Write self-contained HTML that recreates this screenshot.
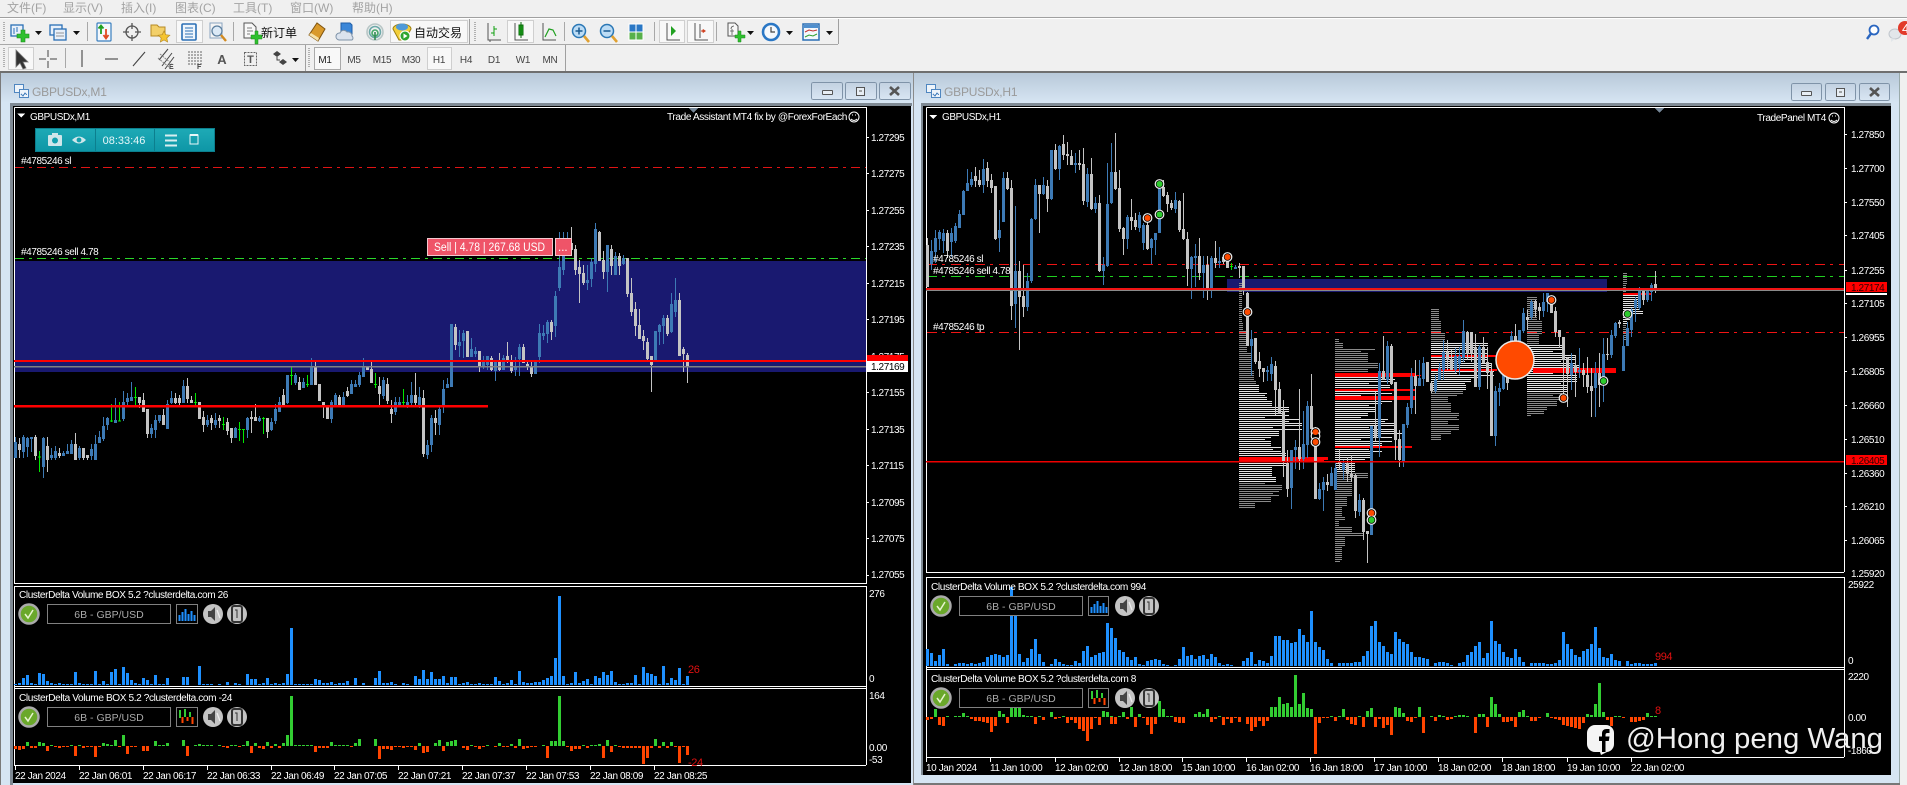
<!DOCTYPE html>
<html lang="zh"><head><meta charset="utf-8"><title>MT4</title>
<style>
html,body{margin:0;padding:0;background:#f0f0f0;width:1907px;height:785px;overflow:hidden}
svg{display:block;position:absolute;left:0;top:0}
text{font-family:"Liberation Sans","Noto Sans CJK SC",sans-serif}
.t{font-size:10px;fill:#fff;letter-spacing:-.4px}
.m{font-size:12px;fill:#a3a3a3}
.k{font-size:12px;fill:#111}
.tf{font-size:10px;fill:#444;text-anchor:middle;letter-spacing:-.3px}
.w{font-size:12px;fill:#9a9a9a;letter-spacing:-.2px}
.c{shape-rendering:geometricPrecision}
</style></head><body>
<svg width="1907" height="785" viewBox="0 0 1907 785" shape-rendering="crispEdges">
<defs>
<linearGradient id="tg" x1="0" y1="0" x2="0" y2="1"><stop offset="0" stop-color="#b8c9d9"/><stop offset="1" stop-color="#d6e5f3"/></linearGradient>
<linearGradient id="bg" x1="0" y1="0" x2="0" y2="1"><stop offset="0" stop-color="#c2d1e1"/><stop offset="1" stop-color="#d9e6f3"/></linearGradient>
<linearGradient id="teal" x1="0" y1="0" x2="0" y2="1"><stop offset="0" stop-color="#1eaab6"/><stop offset="1" stop-color="#0e96a6"/></linearGradient>
<pattern id="pw" width="96" height="22" patternUnits="userSpaceOnUse" patternTransform="translate(87,1)"><path d="M0 .5H96M0 2.500H50M0 4.500H96M0 6.500H72M0 8.500H34M0 10.500H96M0 12.500H60M0 14.500H96M0 16.500H44M0 18.500H84M0 20.500H26" stroke="#e4e4e4" fill="none"/></pattern>
<pattern id="pg" width="96" height="22" patternUnits="userSpaceOnUse" patternTransform="translate(87,1)"><path d="M0 .5H96M0 2.500H50M0 4.500H96M0 6.500H72M0 8.500H34M0 10.500H96M0 12.500H60M0 14.500H96M0 16.500H44M0 18.500H84M0 20.500H26" stroke="#8a8a8a" fill="none"/></pattern>
</defs>

<!-- chrome -->
<rect width="1907" height="785" fill="#f0f0f0"/>
<rect y="17" width="1907" height="1" fill="#a0a0a0"/><rect y="18" width="1907" height="1" fill="#fff"/>
<rect y="44" width="838" height="1" fill="#a8a8a8"/>
<rect y="71" width="1907" height="2" fill="#6f6f6f"/>
<path d="M469.5 19V44M838.5 19V44M305.5 45V71M565.5 45V71" stroke="#a0a0a0"/>
<path d="M87.5 22V41M233.5 22V41M564.5 22V41M654.5 22V41M716.5 22V41M65.5 48V68" stroke="#a8a8a8"/>
<path d="M4 22V41M475 22V41M4 48V68M309 48V68" stroke="#b0b0b0" stroke-dasharray="1 1" stroke-width="2"/>
<text class="m" x="7" y="12">文件(F)</text><text class="m" x="63" y="12">显示(V)</text><text class="m" x="121" y="12">插入(I)</text><text class="m" x="175" y="12">图表(C)</text><text class="m" x="233" y="12">工具(T)</text><text class="m" x="290" y="12">窗口(W)</text><text class="m" x="352" y="12">帮助(H)</text>

<!-- active buttons -->
<g fill="#f8f8f8" stroke="#cfcfcf"><rect x="176.5" y="20.5" width="26" height="22"/><rect x="390.5" y="20.5" width="77" height="22"/><rect x="507.5" y="20.5" width="26" height="22"/><rect x="659.5" y="20.5" width="25" height="22"/><rect x="687.5" y="20.5" width="26" height="22"/><rect x="8.5" y="47.5" width="25" height="22"/><rect x="314.5" y="47.5" width="26" height="22" stroke="#aaa"/><rect x="427.5" y="47.5" width="24" height="22"/></g>

<g class="c">
<!-- new chart -->
<g transform="translate(18,32)"><rect x="-7" y="-7" width="12" height="11" fill="#e8f0fa" stroke="#2a6fb5" stroke-width="1.3"/><path d="M-4-4V2M-1-5V0" stroke="#2a6fb5"/><path d="M3-2h4v4h4v4H7v4H3V6h-4V2h4z" fill="#2fc02f" stroke="#1a8a1a" stroke-width=".6"/></g>
<path d="M35 31h7l-3.500 4z M73 31h7l-3.500 4z M747 31h7l-3.500 4z M786 31h7l-3.500 4z M826 31h7l-3.500 4z M292 58h7l-3.500 4z" fill="#111"/>
<!-- profiles -->
<g transform="translate(58,32)" fill="#e8f0fa" stroke="#2a6fb5" stroke-width="1.3"><rect x="-8" y="-7" width="12" height="10"/><rect x="-4" y="-3" width="12" height="11"/><path d="M-2 1h8M-2 4h8" stroke="#777" stroke-width=".8"/></g>
<!-- market watch -->
<g transform="translate(104,32)"><rect x="-7" y="-9" width="14" height="18" rx="1" fill="#f4f8fc" stroke="#3a7fbf" stroke-width="1.2"/><path d="M-3 2V-6M-5.500-3.500-3-6.500-.5-3.500" stroke="#20a020" stroke-width="1.800" fill="none"/><path d="M2-3V6M-.5 3 2 6.500 4.500 3" stroke="#e04a20" stroke-width="1.800" fill="none"/></g>
<!-- crosshair -->
<g transform="translate(132,32)" fill="none" stroke="#555" stroke-width="1.300"><circle r="6"/><path d="M0-9V-3M0 3V9M-9 0H-3M3 0H9"/></g>
<!-- folder star -->
<g transform="translate(160,32)"><path d="M-9-7h6l2 2h6v9H-9z" fill="#f3d06a" stroke="#b68a24"/><path d="M4-1l1.800 3.700 4 .5-3 2.800.8 4-3.600-2-3.600 2 .8-4-3-2.800 4-.5z" fill="#f5c430" stroke="#b68a24" stroke-width=".7"/></g>
<!-- terminal -->
<g transform="translate(189,32)"><rect x="-7" y="-8" width="14" height="16" rx="1" fill="#eef5fc" stroke="#2a6fb5" stroke-width="1.600"/><path d="M-4-4h8M-4-1h8M-4 2h8M-4 5h8" stroke="#2a6fb5"/></g>
<!-- tester -->
<g transform="translate(217,32)"><rect x="-7" y="-9" width="12" height="15" fill="#f4f4f4" stroke="#8aa5c0"/><circle cx="0" cy="-1" r="5" fill="#dbe9f6" stroke="#5c7f9f" stroke-width="1.300"/><path d="M4 3l5 6" stroke="#d28a20" stroke-width="2.400"/></g>
<!-- new order -->
<g transform="translate(251,32)"><path d="M-7-9h8l4 4V6H-7z" fill="#f8f8f8" stroke="#555"/><path d="M-4-4h5M-4-1h6M-4 2h3" stroke="#555" stroke-width=".8"/><path d="M1 2h4v-4h3v4h4v4H8v5H5V6H1z" transform="translate(-1,1)" fill="#2fc02f" stroke="#1a8a1a" stroke-width=".5"/></g>
<text class="k" x="261" y="37">新订单</text>
<!-- expert gold -->
<g transform="translate(317,32)"><path d="M-8 3 0-9 8-3 1 9z" fill="#d99a2b" stroke="#7f5410"/><path d="M-8 3 1 9 2 6-6 1z" fill="#f5e2a8"/></g>
<!-- cloud -->
<g transform="translate(346,32)"><path d="M-5-9h9l2 2V2H-5z" fill="#3a86d8" stroke="#1f5ea8"/><path d="M-7 8a3.500 3.500 0 0 1 1-7 4 4 0 0 1 7-1 4 4 0 0 1 5 4 2.500 2.500 0 0 1 0 4z" fill="#dbe3ee" stroke="#7f93a8"/></g>
<!-- signal -->
<g transform="translate(375,32)" fill="none" stroke-width="1.600"><circle r="8" stroke="#b8c6c6"/><circle r="5.500" stroke="#6ca8a8"/><circle cy="1" r="3" stroke="#44a868"/><path d="M0 0V8" stroke="#338a55"/></g>
<!-- auto -->
<g transform="translate(402,32)"><path d="M-9-3a9 5 0 0 1 18 0L3 8h-6z" fill="#f3cf3a" stroke="#9c7f10"/><ellipse cy="-5" rx="6" ry="3.500" fill="#4f9ad8"/><circle cx="3" cy="4" r="5" fill="#2fa52f" stroke="#fff"/><path d="M1.500 1.500v5l4-2.500z" fill="#fff"/></g>
<text class="k" x="414" y="37">自动交易</text>
<!-- bar/candle/line -->
<g fill="none" stroke="#555"><path d="M488 23V40H501M490 40V42"/><path d="M515 23V40H528"/><path d="M543 23V40H556"/><path d="M667 23V40H680"/><path d="M695 23V40H708"/></g>
<path d="M494 26V36M491 33h3M494 29h3" stroke="#10a010" fill="none"/>
<rect x="519" y="25" width="4" height="10" fill="#20b020" stroke="#0a6a0a"/><path d="M521 22V38" stroke="#0a6a0a"/>
<path d="M545 37 549 29 553 30 556 36" fill="none" stroke="#20a020" stroke-width="1.200"/>
<path d="M671 26v10l5-5z" fill="#20a020"/>
<path d="M700 24V38" stroke="#555"/><path d="M703 29l3 2-3 2-1-2z" fill="#d04020"/><path d="M704 31h-3" stroke="#d04020"/>
<!-- zoom -->
<g transform="translate(579,31)"><circle r="6.500" fill="#bcdcf5" stroke="#2a77b5" stroke-width="1.500"/><path d="M-3.500 0H3.500M0-3.500V3.500" stroke="#1a5a90" stroke-width="1.500"/><path d="M5 5 10 11" stroke="#e0a030" stroke-width="2.600"/></g>
<g transform="translate(607,31)"><circle r="6.500" fill="#bcdcf5" stroke="#2a77b5" stroke-width="1.500"/><path d="M-3.500 0H3.500" stroke="#1a5a90" stroke-width="1.500"/><path d="M5 5 10 11" stroke="#e0a030" stroke-width="2.600"/></g>
<g transform="translate(636,32)"><rect x="-7" y="-8" width="14" height="8" fill="#2a77c5"/><rect x="-7" y="0" width="14" height="8" fill="#58b04a"/><path d="M-7-8H7V8H-7ZM-7 0H7M0-8V8" fill="none" stroke="#fff" stroke-width="1"/></g>
<!-- indicator -->
<g transform="translate(734,32)"><path d="M-6-9h7l3 3V4H-6z" fill="#f8f8f8" stroke="#555"/><path d="M-3-3c0-3 3-3 3-3M-4-1h4M-2-3V3" stroke="#555" stroke-width=".8" fill="none"/><path d="M1 3h3v-4h3v4h4v3H7v4H4V6H1z" fill="#2fc02f" stroke="#1a8a1a" stroke-width=".5"/></g>
<!-- clock -->
<g transform="translate(771,32)"><circle r="8" fill="#f4f8fc" stroke="#2a77c5" stroke-width="2.600"/><path d="M0-5V0H4" stroke="#444" fill="none" stroke-width="1.200"/></g>
<!-- template -->
<g transform="translate(811,32)"><rect x="-8" y="-8" width="16" height="16" fill="#f4f8fc" stroke="#2a6fb5" stroke-width="1.500"/><rect x="-7" y="-7" width="14" height="3" fill="#4f8fce"/><path d="M-6 0-2-2 2-1 6-2" stroke="#c03030" fill="none"/><path d="M-6 5-2 3 2 4 6 2" stroke="#30a030" fill="none"/></g>

<!-- row 2 -->
<path d="M16 50V67L20 63 23 69 26 68 23 62H28Z" fill="#333" stroke="#777" stroke-width=".8"/>
<path d="M48 50V57M48 61V68M39 59H46M50 59H57" stroke="#444" fill="none"/>
<path d="M82 50V67M105 59H118" stroke="#333" fill="none"/>
<path d="M133 66 145 52" stroke="#444" fill="none" stroke-width="1.100"/>
<path d="M159 60 168 49M162 66 172 53M165 69 174 57" stroke="#444" fill="none"/><path d="M160 54 172 64M158 58 170 68" stroke="#888" fill="none" stroke-dasharray="2 1"/>
<text x="169" y="69" style="font-size:7px;font-weight:bold" fill="#444">E</text>
<path d="M188 52H202M188 55H202M188 58H202M188 61H202M188 64H202" stroke="#666" stroke-dasharray="2 1" fill="none"/>
<text x="197" y="69" style="font-size:7px;font-weight:bold" fill="#444">F</text>
<text x="222" y="64" text-anchor="middle" style="font-size:13px;font-weight:bold" fill="#555">A</text>
<rect x="244.500" y="52.500" width="12" height="13" fill="none" stroke="#666" stroke-dasharray="2 1"/><text x="250.500" y="63" text-anchor="middle" style="font-size:11px;font-weight:bold" fill="#555">T</text>
<path d="M273 54l4-3 4 3-4 3zM279 62l4-3 4 3-4 3z" fill="#444"/><path d="M277 57v3h3" stroke="#444" fill="none"/>
<!-- search & chat -->
<g transform="translate(1872,32)"><circle cx="2" cy="-2" r="4.500" fill="#fff" stroke="#2a66c0" stroke-width="1.800"/><path d="M-1 1.500-5 7" stroke="#2a66c0" stroke-width="2.400"/></g>
<ellipse cx="1895" cy="34" rx="6" ry="5" fill="#e2e6ea" stroke="#c0c6cc"/><path d="M1891 38l0 4 4-3z" fill="#e2e6ea"/>
<circle cx="1905" cy="28" r="7" fill="#e23a2a"/><text x="1902" y="33" style="font-size:13px" fill="#fff">4</text>
</g>
<text class="tf" x="325" y="63" style="fill:#222">M1</text><text class="tf" x="354" y="63">M5</text><text class="tf" x="382" y="63">M15</text><text class="tf" x="411" y="63">M30</text><text class="tf" x="439" y="63">H1</text><text class="tf" x="466" y="63">H4</text><text class="tf" x="494" y="63">D1</text><text class="tf" x="523" y="63">W1</text><text class="tf" x="550" y="63">MN</text>

<!-- LEFT WINDOW -->
<rect x="1" y="73" width="913" height="712" fill="#d6e5f3"/>
<rect x="1" y="73" width="913" height="30" fill="url(#tg)"/>
<rect x="0" y="73" width="1" height="712" fill="#7a7a7a"/>
<rect x="10" y="103" width="902" height="3" fill="#7f8a94"/>
<rect x="10" y="103" width="3" height="682" fill="#7f8a94"/>
<rect x="13" y="106" width="898" height="677" fill="#000"/>
<g fill="#eef4fa" stroke="#4f86c0"><rect x="14.500" y="84.500" width="9" height="8"/><rect x="19.500" y="89.500" width="9" height="8"/></g>
<path d="M21 94l2 2 2-3 2 2" stroke="#4f86c0" fill="none"/>
<text class="w" x="32" y="96">GBPUSDx,M1</text>

<!-- RIGHT WINDOW -->
<rect x="914" y="73" width="986" height="711" fill="#d6e5f3"/>
<rect x="914" y="73" width="986" height="30" fill="url(#tg)"/>
<rect x="913" y="73" width="1" height="712" fill="#8a8a8a"/>
<rect x="1899" y="73" width="1" height="712" fill="#9aa"/>
<rect x="914" y="783" width="986" height="2" fill="#777"/>
<rect x="921" y="103" width="970" height="3" fill="#7f8a94"/>
<rect x="921" y="103" width="2" height="672" fill="#7f8a94"/>
<rect x="923" y="106" width="968" height="669" fill="#000"/>
<g fill="#eef4fa" stroke="#4f86c0"><rect x="926.500" y="84.500" width="9" height="8"/><rect x="931.500" y="89.500" width="9" height="8"/></g>
<path d="M933 94l2 2 2-3 2 2" stroke="#4f86c0" fill="none"/>
<text class="w" x="944" y="96">GBPUSDx,H1</text>

<!-- window buttons -->
<g fill="url(#bg)" stroke="#7f93a8">
<rect x="811.500" y="82.500" width="31" height="17" rx="2"/><rect x="845.500" y="82.500" width="31" height="17" rx="2"/><rect x="879.500" y="82.500" width="31" height="17" rx="2"/>
<rect x="1791.500" y="83.500" width="30" height="17" rx="2"/><rect x="1825.500" y="83.500" width="30" height="17" rx="2"/><rect x="1859.500" y="83.500" width="30" height="17" rx="2"/>
</g>
<g fill="#e8eef4" stroke="#555"><rect x="822.500" y="90.500" width="10" height="4" rx="1"/><rect x="1801.500" y="91.500" width="10" height="4" rx="1"/><rect x="856.500" y="87.500" width="8" height="8"/><rect x="1836.500" y="88.500" width="8" height="8"/></g>
<path d="M859 91h3M1839 92h3" stroke="#555"/>
<path class="c" d="M890 87l9 8M899 87l-9 8M1870 88l9 8M1879 88l-9 8" stroke="#555" stroke-width="2.600"/>

<!-- LEFT CHART -->
<rect x="15" y="261" width="851" height="111" fill="#191970"/>
<path d="M14.500 107.500H866.500V584M14.500 107.500V584M14 583.500H866M14 586.500H866M866.500 586V765M14.500 586V765M14 686.500H866M14 688.500H866M14 765.500H866" stroke="#fff" fill="none"/>
<path d="M15 167.500H866" stroke="#e01414" stroke-dasharray="9 5 3 5" fill="none"/>
<path d="M15 258.500H866" stroke="#2ad82a" stroke-dasharray="9 5 3 5" fill="none" stroke-width="1"/>
<g fill="none" stroke="#3d7ab5"><path d="M15.500 437V458M23.500 435V458M27.500 437V457M31.500 437V452M43.500 437V478M51.500 448V460M55.500 446V460M63.500 451V456M67.500 444V454M71.500 440V454M79.500 446V460M91.500 444V460M95.500 435V460M99.500 431V443M103.500 417V441M107.500 417V430M115.500 398V423M123.500 391V421M127.500 393V406M131.500 382V401M151.500 424V438M155.500 415V438M159.500 415V423M167.500 400V429M171.500 391V404M183.500 380V403M207.500 415V427M215.500 413V428M235.500 427V438M247.500 417V438M259.500 416V422M271.500 418V431M275.500 404V424M279.500 397V412M287.500 375V404M295.500 373V385M303.500 378V388M311.500 358V385M331.500 400V423M335.500 393V407M343.500 392V406M351.500 380V394M355.500 380V387M359.500 372V387M363.500 358V377M383.500 377V399M395.500 397V415M399.500 397V407M407.500 395V408M411.500 382V407M419.500 387V408M427.500 440V459M431.500 415V452M439.500 407V435M443.500 380V413M447.500 378V388M451.500 324V387M459.500 330V357M463.500 330V358M471.500 338V357M475.500 347V357M483.500 356V369M487.500 356V370M495.500 362V381M503.500 355V370M515.500 357V376M519.500 344V376M535.500 360V374M539.500 324V363M543.500 325V340M547.500 320V343M555.500 291V337M559.500 232V291M563.500 232V275M567.500 232V255M587.500 265V290M591.500 258V287M595.500 223V272M607.500 245V292M615.500 252V275M623.500 255V265M655.500 331V362M659.500 324V345M663.500 315V344M671.500 293V333M675.500 278V317"/>
<path stroke-width="3" d="M15.500 442V458M23.500 437V452M27.500 438V447M31.500 437V439M43.500 438V467M51.500 455V458M55.500 451V458M63.500 453V456M67.500 451V454M71.500 444V454M79.500 448V458M91.500 449V456M95.500 444V460M99.500 437V443M103.500 426V439M107.500 418V425M115.500 420V423M123.500 402V419M127.500 398V402M131.500 397V401M151.500 428V434M155.500 420V430M159.500 415V421M167.500 404V429M171.500 398V403M183.500 386V403M207.500 420V425M215.500 420V425M235.500 428V438M247.500 418V430M259.500 418V421M271.500 422V430M275.500 409V421M279.500 402V412M287.500 375V403M295.500 375V383M303.500 382V388M311.500 367V385M331.500 402V419M335.500 395V406M343.500 397V406M351.500 384V394M355.500 384V387M359.500 375V385M363.500 367V377M383.500 380V396M395.500 402V412M399.500 402V405M407.500 402V405M411.500 395V403M419.500 397V407M427.500 445V455M431.500 418V445M439.500 409V425M443.500 389V407M447.500 384V388M451.500 324V387M459.500 342V346M463.500 333V341M471.500 349V357M475.500 351V354M483.500 362V367M487.500 356V365M495.500 362V371M503.500 358V370M515.500 366V370M519.500 347V359M535.500 360V374M539.500 333V357M543.500 333V336M547.500 322V334M555.500 296V326M559.500 267V288M563.500 255V270M567.500 240V250M587.500 280V283M591.500 262V279M595.500 229V264M607.500 245V272M615.500 256V275M623.500 258V264M655.500 331V362M659.500 325V332M663.500 318V326M671.500 304V332M675.500 300V312"/></g>
<g fill="none" stroke="#c4c4c4"><path d="M19.500 438V458M35.500 435V460M47.500 437V472M59.500 448V458M75.500 433V460M83.500 448V460M87.500 455V460M139.500 397V408M143.500 393V412M147.500 409V438M163.500 409V425M175.500 393V404M179.500 395V405M187.500 378V403M191.500 396V403M199.500 402V419M203.500 411V432M211.500 415V430M219.500 415V428M227.500 418V435M231.500 428V443M251.500 411V433M255.500 404V421M267.500 418V438M283.500 389V407M299.500 377V390M315.500 360V385M319.500 384V401M323.500 402V418M327.500 405V419M339.500 395V407M347.500 387V397M367.500 366V370M371.500 360V383M379.500 377V405M387.500 378V404M391.500 400V423M415.500 373V407M423.500 390V457M435.500 410V435M455.500 324V350M467.500 331V357M479.500 351V372M491.500 356V371M499.500 353V371M507.500 342V363M511.500 355V373M523.500 344V363M527.500 360V370M531.500 362V377M551.500 320V340M571.500 227V256M575.500 245V275M579.500 260V303M583.500 265V285M599.500 231V260M603.500 251V279M611.500 245V275M619.500 253V275M627.500 258V297M631.500 278V316M635.500 302V336M639.500 309V339M643.500 330V350M647.500 338V360M651.500 356V392M667.500 315V336M679.500 293V356M683.500 347V372M687.500 353V383"/>
<path stroke-width="3" d="M19.500 444V450M35.500 437V456M47.500 446V460M59.500 453V456M75.500 444V460M83.500 448V458M87.500 455V458M139.500 397V403M143.500 400V412M147.500 409V434M163.500 415V425M175.500 398V403M179.500 398V403M187.500 386V399M191.500 400V403M199.500 402V419M203.500 417V425M211.500 418V423M219.500 418V421M227.500 422V431M231.500 428V438M251.500 417V419M255.500 417V421M267.500 418V432M283.500 395V405M299.500 382V390M315.500 367V385M319.500 384V401M323.500 402V405M327.500 406V419M339.500 397V406M347.500 391V396M367.500 366V370M371.500 369V383M379.500 386V394M387.500 384V401M391.500 409V414M415.500 395V403M423.500 398V454M435.500 418V423M455.500 327V345M467.500 331V357M479.500 351V367M491.500 358V370M499.500 360V370M507.500 356V361M511.500 360V371M523.500 347V363M527.500 364V367M531.500 366V374M551.500 322V332M571.500 243V250M575.500 249V270M579.500 267V274M583.500 273V283M599.500 232V261M603.500 260V272M611.500 249V266M619.500 256V266M627.500 258V294M631.500 293V312M635.500 309V326M639.500 325V339M643.500 336V341M647.500 342V359M651.500 356V365M667.500 318V334M679.500 300V356M683.500 349V354M687.500 355V367"/></g>
<g fill="none" stroke="#00e800"><path d="M39.500 451V472M38 457h3M111.500 404V422M110 421h3M119.500 402V421M118 421h3M135.500 387V405M134 397.500h3M195.500 393V405M194 402.500h3M223.500 417V430M222 424.500h3M239.500 422V441M238 429.500h3M243.500 429V443M242 429.500h3M263.500 417V434M262 418.500h3M291.500 367V385M290 375.500h3M307.500 375V387M306 384.500h3M375.500 373V388M374 384.500h3M403.500 389V405M402 402.500h3"/></g>
<rect x="14" y="360" width="852" height="2" fill="#f00"/><rect x="14" y="366" width="852" height="1.500" fill="#808080"/>
<rect x="14" y="405" width="474" height="2.500" fill="#f00"/>
<text class="t" x="21" y="164">#4785246 sl</text><text class="t" x="21" y="255">#4785246 sell 4.78</text>
<text class="t" x="30" y="120">GBPUSDx,M1</text>
<path d="M17 113.500h8l-4 4z" fill="#fff"/>
<path d="M689 108h9l-4.500 5z" fill="#778899"/>
<text class="t" x="667" y="120" textLength="180" lengthAdjust="spacingAndGlyphs">Trade Assistant MT4 fix by @ForexForEach</text>
<g class="c" fill="none" stroke="#fff"><circle cx="854" cy="117" r="5"/><path d="M851 119q3 3 6 0"/></g><path d="M852 115h1M855 115h1" stroke="#fff"/>
<!-- teal panel -->
<rect x="35.500" y="128.500" width="179" height="23" fill="url(#teal)" stroke="#0c7f8e"/>
<path d="M95.500 129V151M154.500 129V151" stroke="#0c7f8e"/>
<g class="c"><rect x="48" y="135" width="14" height="11" rx="1" fill="#cfe6ea"/><rect x="52" y="133" width="6" height="3" fill="#cfe6ea"/><circle cx="55" cy="140.500" r="3" fill="#11a0ae"/><path d="M72 140q7-7 14 0q-7 7-14 0z" fill="#cfe6ea"/><circle cx="79" cy="140" r="2.400" fill="#11a0ae"/></g>
<text x="124" y="144" text-anchor="middle" style="font-size:11px" fill="#e6f6f8">08:33:46</text>
<path d="M165 135.500h12M165 140.500h12M165 145.500h12" stroke="#d8eef0" stroke-width="1.600"/>
<rect x="190" y="135" width="8" height="9" fill="none" stroke="#e8f6f8" stroke-width="1.400"/><rect x="190" y="134" width="8" height="2" fill="#e8f6f8"/>
<!-- sell btn -->
<rect x="427.500" y="238.500" width="125" height="17" fill="#ef5468" stroke="#f4c8cf"/><rect x="555.500" y="238.500" width="16" height="17" fill="#ef5468" stroke="#f4c8cf"/>
<text x="434" y="251" style="font-size:11.500px" fill="#fff" textLength="111" lengthAdjust="spacingAndGlyphs">Sell | 4.78 | 267.68 USD</text><text x="558" y="251" style="font-size:11.500px" fill="#fff">...</text>
<!-- left axis -->
<path d="M866 137.500h3M866 173.500h3M866 210.500h3M866 246.500h3M866 283.500h3M866 319.500h3M866 356.500h3M866 392.500h3M866 429.500h3M866 465.500h3M866 502.500h3M866 538.500h3M866 575.500h3" stroke="#fff"/>
<g class="t"><text x="871" y="141">1.27295</text><text x="871" y="177">1.27275</text><text x="871" y="214">1.27255</text><text x="871" y="250">1.27235</text><text x="871" y="287">1.27215</text><text x="871" y="323">1.27195</text><text x="871" y="360">1.27175</text><text x="871" y="396">1.27155</text><text x="871" y="433">1.27135</text><text x="871" y="469">1.27115</text><text x="871" y="506">1.27095</text><text x="871" y="542">1.27075</text><text x="871" y="578">1.27055</text></g>
<rect x="867" y="355" width="41" height="7" fill="#f00"/><rect x="867" y="361" width="41" height="11" fill="#fff"/>
<text class="t" x="871" y="370" style="fill:#000">1.27169</text>
<text class="t" x="869" y="597">276</text><text class="t" x="869" y="682">0</text><text class="t" x="869" y="699">164</text><text class="t" x="869" y="751">0.00</text><text class="t" x="869" y="763">-53</text>
<path d="M15 765V770M79 765V770M143 765V770M207 765V770M271 765V770M334 765V770M398 765V770M462 765V770M526 765V770M590 765V770M654 765V770" stroke="#fff" transform="translate(.5,0)"/>
<g class="t"><text x="15" y="779">22 Jan 2024</text><text x="79" y="779">22 Jan 06:01</text><text x="143" y="779">22 Jan 06:17</text><text x="207" y="779">22 Jan 06:33</text><text x="271" y="779">22 Jan 06:49</text><text x="334" y="779">22 Jan 07:05</text><text x="398" y="779">22 Jan 07:21</text><text x="462" y="779">22 Jan 07:37</text><text x="526" y="779">22 Jan 07:53</text><text x="590" y="779">22 Jan 08:09</text><text x="654" y="779">22 Jan 08:25</text></g>

<!-- left sub1 -->
<path fill="none" stroke="#1e90ff" stroke-width="3" d="M15.500 685v-1M19.500 685v-2M23.500 685v-7M27.500 685v-10M31.500 685v-2M35.500 685v-1M39.500 685v-12M43.500 685v-11M47.500 685v-4M51.500 685v-2M55.500 685v-1M59.500 685v-2M63.500 685v-1M67.500 685v-1M71.500 685v-1M75.500 685v-13M79.500 685v-2M83.500 685v-1M87.500 685v-1M91.500 685v-1M95.500 685v-14M99.500 685v-1M103.500 685v-4M107.500 685v-1M111.500 685v-13M115.500 685v-16M119.500 685v-1M123.500 685v-18M127.500 685v-12M131.500 685v-5M135.500 685v-2M139.500 685v-1M143.500 685v-7M147.500 685v-5M151.500 685v-1M155.500 685v-10M159.500 685v-1M163.500 685v-1M167.500 685v-7M183.500 685v-8M187.500 685v-8M199.500 685v-19M203.500 685v-1M207.500 685v-1M211.500 685v-1M219.500 685v-1M227.500 685v-3M235.500 685v-2M239.500 685v-1M247.500 685v-11M251.500 685v-6M255.500 685v-6M259.500 685v-1M263.500 685v-2M267.500 685v-7M271.500 685v-1M275.500 685v-2M279.500 685v-1M283.500 685v-2M287.500 685v-11M291.500 685v-57M295.500 685v-1M299.500 685v-1M303.500 685v-1M307.500 685v-1M311.500 685v-1M315.500 685v-6M319.500 685v-5M323.500 685v-2M327.500 685v-2M331.500 685v-3M335.500 685v-1M339.500 685v-2M343.500 685v-2M347.500 685v-4M355.500 685v-7M363.500 685v-2M375.500 685v-7M379.500 685v-14M383.500 685v-2M387.500 685v-2M391.500 685v-3M395.500 685v-1M403.500 685v-2M407.500 685v-1M415.500 685v-9M419.500 685v-6M423.500 685v-15M427.500 685v-6M431.500 685v-13M435.500 685v-6M439.500 685v-6M443.500 685v-9M447.500 685v-2M451.500 685v-8M455.500 685v-8M459.500 685v-1M463.500 685v-2M467.500 685v-3M471.500 685v-1M475.500 685v-1M479.500 685v-2M483.500 685v-1M487.500 685v-1M491.500 685v-1M495.500 685v-8M499.500 685v-4M503.500 685v-1M507.500 685v-2M511.500 685v-5M515.500 685v-1M519.500 685v-14M523.500 685v-3M527.500 685v-2M531.500 685v-2M535.500 685v-3M539.500 685v-3M543.500 685v-5M547.500 685v-7M551.500 685v-9M555.500 685v-27M559.500 685v-89M563.500 685v-9M567.500 685v-1M571.500 685v-2M575.500 685v-13M579.500 685v-2M583.500 685v-4M587.500 685v-6M591.500 685v-1M595.500 685v-9M599.500 685v-7M603.500 685v-13M607.500 685v-10M611.500 685v-14M615.500 685v-3M619.500 685v-1M623.500 685v-1M627.500 685v-2M631.500 685v-2M635.500 685v-10M639.500 685v-1M643.500 685v-18M647.500 685v-12M651.500 685v-11M655.500 685v-9M659.500 685v-1M663.500 685v-19M667.500 685v-2M671.500 685v-7M675.500 685v-5M679.500 685v-17M683.500 685v-1M687.500 685v-9"/>
<!-- left sub2 -->
<path fill="none" stroke="#32cd32" stroke-width="3" d="M27.500 746v-4M39.500 746v-4M43.500 746v-3M51.500 746v-1M71.500 746v-1M79.500 746v-1M103.500 746v-3M107.500 746v-2M111.500 746v-1M115.500 746v-6M123.500 746v-11M155.500 746v-5M159.500 746v-1M163.500 746v-1M167.500 746v-3M183.500 746v-6M195.500 746v-1M199.500 746v-2M203.500 746v-1M207.500 746v-1M211.500 746v-1M219.500 746v-1M231.500 746v-1M235.500 746v-1M243.500 746v-1M247.500 746v-5M255.500 746v-3M267.500 746v-4M275.500 746v-2M283.500 746v-3M287.500 746v-11M291.500 746v-50M295.500 746v-1M299.500 746v-1M303.500 746v-1M307.500 746v-1M311.500 746v-1M331.500 746v-4M335.500 746v-1M339.500 746v-1M343.500 746v-1M347.500 746v-1M355.500 746v-3M359.500 746v-7M375.500 746v-7M419.500 746v-3M435.500 746v-3M439.500 746v-6M447.500 746v-4M451.500 746v-5M455.500 746v-6M471.500 746v-1M487.500 746v-1M499.500 746v-3M511.500 746v-2M519.500 746v-7M543.500 746v-1M551.500 746v-5M555.500 746v-5M559.500 746v-50M563.500 746v-5M583.500 746v-1M591.500 746v-1M595.500 746v-1M599.500 746v-2M607.500 746v-6M615.500 746v-1M655.500 746v-7M663.500 746v-4M671.500 746v-4"/>
<path fill="none" stroke="#ff4500" stroke-width="3" d="M15.500 746v3M19.500 746v4M23.500 746v3M31.500 746v2M35.500 746v2M47.500 746v5M55.500 746v1M59.500 746v2M63.500 746v1M67.500 746v1M75.500 746v10M83.500 746v2M87.500 746v1M91.500 746v1M95.500 746v11M99.500 746v1M119.500 746v1M127.500 746v8M131.500 746v1M135.500 746v1M143.500 746v5M147.500 746v5M187.500 746v10M223.500 746v1M227.500 746v2M239.500 746v1M251.500 746v7M259.500 746v2M263.500 746v3M271.500 746v2M279.500 746v2M315.500 746v6M319.500 746v2M323.500 746v2M327.500 746v2M351.500 746v1M379.500 746v13M383.500 746v3M387.500 746v3M391.500 746v4M395.500 746v1M399.500 746v1M403.500 746v2M407.500 746v1M411.500 746v1M415.500 746v4M423.500 746v7M427.500 746v6M443.500 746v5M463.500 746v2M467.500 746v4M475.500 746v1M479.500 746v3M483.500 746v1M495.500 746v1M503.500 746v1M507.500 746v1M515.500 746v2M523.500 746v3M527.500 746v2M531.500 746v1M535.500 746v1M547.500 746v12M567.500 746v1M571.500 746v5M575.500 746v3M579.500 746v3M587.500 746v2M603.500 746v12M611.500 746v6M619.500 746v1M623.500 746v2M627.500 746v2M631.500 746v2M635.500 746v2M639.500 746v2M643.500 746v18M647.500 746v12M651.500 746v2M659.500 746v2M667.500 746v2M675.500 746v1M679.500 746v17M683.500 746v1M687.500 746v9"/>
<!-- left sub UI -->
<text class="t" x="19" y="598" textLength="209" lengthAdjust="spacingAndGlyphs">ClusterDelta Volume BOX 5.2 ?clusterdelta.com 26</text>
<text class="t" x="19" y="701" textLength="213" lengthAdjust="spacingAndGlyphs">ClusterDelta Volume BOX 5.2 ?clusterdelta.com -24</text>
<text class="t" x="688" y="673" style="font-size:11px;fill:#e01010">26</text><text class="t" x="688" y="766" style="font-size:11px;fill:#e01010">-24</text>
<g fill="none" stroke="#808080" stroke-width="1"><rect x="47.500" y="604.500" width="123" height="19"/><rect x="47.500" y="707.500" width="123" height="19"/><rect x="176.500" y="604.500" width="21" height="19"/><rect x="176.500" y="707.500" width="21" height="19"/></g>
<text x="109" y="618" text-anchor="middle" style="font-size:10.500px" fill="#aaa">6B - GBP/USD</text><text x="109" y="721" text-anchor="middle" style="font-size:10.500px" fill="#aaa">6B - GBP/USD</text>
<path d="M179.500 621v-6M182.500 621v-9M185.500 621v-12M188.500 621v-7M191.500 621v-10M194.500 621v-6" stroke="#1e90ff" stroke-width="2"/>
<path d="M180 710v8M185 709v8M190 712v5" stroke="#32cd32" stroke-width="2"/><path d="M182.500 717v6M187.500 717v4M192.500 717v7" stroke="#ff4500" stroke-width="2"/>
<g class="c">
<g id="a1"><circle cx="29" cy="614" r="9.500" fill="#6aa82a" stroke="#aaa" stroke-width="2.500"/><path d="M25 614l3 4 5-8" fill="none" stroke="#e8f5d0" stroke-width="1.500"/></g>
<circle cx="29" cy="717" r="9.500" fill="#6aa82a" stroke="#aaa" stroke-width="2.500"/><path d="M25 717l3 4 5-8" fill="none" stroke="#e8f5d0" stroke-width="1.500"/>
<g fill="#c4c4c4"><circle cx="213" cy="614" r="10"/><circle cx="237" cy="614" r="10"/><circle cx="213" cy="717" r="10"/><circle cx="237" cy="717" r="10"/></g>
<path d="M208 611h3l4-4v14l-4-4h-3zM208 714h3l4-4v14l-4-4h-3z" fill="#444"/><path d="M217 610l3 8M217 713l3 8" stroke="#eee" stroke-width="1.300"/>
<rect x="232" y="606" width="10" height="16" rx="2" fill="none" stroke="#333" stroke-width="2"/><rect x="232" y="709" width="10" height="16" rx="2" fill="none" stroke="#333" stroke-width="2"/>
<path d="M235 610h2v8M235 713h2v8" stroke="#333" fill="none"/>
</g>

<!-- RIGHT CHART -->
<path d="M926.500 107.500H1844.500V572M926.500 107.500V572M926 572.500H1844M926 577.500H1844M1844.500 577V757M926.500 577V757M926 667.500H1844M926 669.500H1844M926 757.500H1844" stroke="#fff" fill="none"/>
<path d="M927 264.500H1844" stroke="#f01414" stroke-dasharray="10 5 3 6" fill="none"/>
<path d="M927 276.500H1844" stroke="#20d020" stroke-dasharray="10 5 3 6" fill="none"/>
<path d="M927 332.500H1844" stroke="#f01414" stroke-dasharray="10 5 3 6" fill="none"/>
<rect x="1227" y="279" width="380" height="13" fill="#191970"/>
<!-- profiles -->
<path fill="url(#pg)" d="M1239 283H1242V322H1243V330H1246V340H1247V353H1251V370H1254V380H1256V385H1239Z"/>
<path fill="url(#pw)" d="M1239 385H1259V392H1267V400H1272V407H1289V417H1299V423H1302V430H1279V437H1271V447H1281V453H1286V467H1272V477H1276V483H1239Z"/>
<path fill="url(#pg)" d="M1239 483H1282V490H1279V497H1271V503H1255V508H1244V509H1239Z"/>
<path fill="url(#pg)" d="M1335 338H1339V343H1343V348H1375V353H1368V363H1378V368H1368V373H1335Z"/>
<path fill="url(#pw)" d="M1335 373H1395V380H1390V390H1392V402H1382V407H1375V412H1368V417H1388V423H1395V430H1402V437H1392V443H1382V452H1372V458H1365V463H1355V473H1335Z"/>
<path fill="url(#pg)" d="M1335 473H1368V478H1352V497H1347V507H1342V517H1345V520H1339V527H1352V532H1363V537H1345V547H1342V553H1342V560H1340V562H1335Z"/>
<path fill="url(#pg)" d="M1431 308H1439V320H1441V332H1445V343H1431Z"/>
<path fill="url(#pw)" d="M1431 343H1488V353H1488V363H1491V370H1494V378H1471V383H1466V390H1431Z"/>
<path fill="url(#pg)" d="M1431 390H1463V397H1448V403H1451V412H1459V420H1448V425H1459V430H1451V435H1441V440H1431Z"/>
<path fill="url(#pg)" d="M1527 297H1537V320H1542V335H1539V345H1527Z"/>
<path fill="url(#pw)" d="M1527 345H1565V355H1575V365H1580V375H1577V385H1567V393H1527Z"/>
<path fill="url(#pg)" d="M1527 393H1562V400H1557V407H1547V411H1544V415H1531V416H1527Z"/>
<path fill="url(#pg)" d="M1623 273H1627V285H1626V294H1623Z"/><path fill="url(#pw)" d="M1623 294H1641V305H1640V310H1643V315H1633V320H1627V324H1623Z"/><path fill="url(#pg)" d="M1623 324H1626V340H1623Z"/>
<g fill="#f00"><rect x="1239" y="457" width="89" height="3"/><rect x="1239" y="460" width="85" height="1"/><rect x="1335" y="373" width="80" height="4"/><rect x="1415" y="375" width="6" height="1"/><rect x="1335" y="389" width="80" height="2"/><rect x="1335" y="396" width="80" height="4"/><rect x="1335" y="446" width="77" height="2"/><rect x="1431" y="355" width="66" height="2"/><rect x="1431" y="369" width="66" height="2"/><rect x="1533" y="368" width="83" height="5"/><rect x="1623" y="293" width="28" height="2"/></g>
<!-- right candles -->
<g fill="none" stroke="#c4c4c4"><path d="M927.500 238V287M947.500 230V258M975.500 167V187M979.500 170V187M987.500 162V187M991.500 174V193M995.500 186V240M1007.500 172V190M1011.500 180V320M1019.500 261V350M1023.500 265V317M1039.500 185V233M1047.500 180V212M1055.500 144V170M1063.500 135V160M1067.500 142V165M1071.500 150V165M1079.500 150V170M1083.500 148V205M1091.500 158V210M1099.500 195V272M1115.500 133V190M1119.500 170V232M1123.500 227V255M1131.500 199V230M1135.500 213V230M1147.500 215V250M1163.500 180V197M1167.500 192V212M1171.500 200V210M1179.500 200V232M1183.500 193V240M1187.500 232V286M1199.500 238V280M1207.500 256V300M1215.500 241V268M1223.500 255V264M1227.500 255V268M1239.500 263V278M1243.500 266V295M1247.500 292V346M1255.500 338V364M1259.500 352V377M1263.500 368V382M1275.500 361V415M1279.500 382V414M1283.500 400V477M1287.500 450V497M1299.500 389V470M1311.500 374V429M1315.500 427V499M1327.500 474V491M1339.500 450V470M1347.500 457V482M1351.500 455V482M1355.500 474V518M1363.500 498V540M1367.500 532V563M1375.500 392V441M1383.500 336V380M1391.500 344V385M1395.500 382V460M1399.500 430V467M1415.500 360V414M1427.500 362V382M1431.500 382V393M1447.500 340V370M1451.500 350V370M1467.500 331V360M1471.500 332V362M1475.500 334V387M1483.500 337V363M1487.500 347V389M1491.500 363V436M1507.500 368V390M1515.500 324V345M1527.500 310V330M1535.500 300V317M1539.500 303V320M1551.500 297V313M1555.500 307V337M1559.500 330V348M1563.500 337V398M1567.500 357V407M1575.500 355V397M1583.500 363V387M1587.500 357V393M1591.500 368V417M1599.500 353V407M1607.500 338V360M1619.500 320V328M1643.500 288V305M1655.500 271V293"/>
<path stroke-width="3" d="M927.500 245V287M947.500 233V251M975.500 176V181M979.500 180V185M987.500 168V181M991.500 180V188M995.500 186V239M1007.500 178V189M1011.500 188V306M1019.500 271V297M1023.500 296V307M1039.500 185V194M1047.500 186V199M1055.500 150V169M1063.500 144V155M1067.500 154V156M1071.500 156V165M1079.500 163V165M1083.500 164V201M1091.500 174V209M1099.500 203V271M1115.500 172V189M1119.500 188V229M1123.500 228V239M1131.500 217V221M1135.500 220V227M1147.500 225V249M1163.500 187V196M1167.500 195V204M1171.500 203V208M1179.500 201V230M1183.500 229V239M1187.500 239V269M1199.500 256V273M1207.500 265V288M1215.500 258V263M1223.500 257V262M1227.500 261V268M1239.500 266V268M1243.500 266V290M1247.500 293V346M1255.500 338V362M1259.500 361V369M1263.500 368V372M1275.500 366V390M1279.500 389V414M1283.500 411V462M1287.500 463V489M1299.500 447V459M1311.500 406V429M1315.500 445V499M1327.500 482V485M1339.500 462V463M1347.500 463V474M1351.500 474V477M1355.500 475V511M1363.500 500V532M1367.500 531V534M1375.500 426V438M1383.500 371V380M1391.500 346V384M1395.500 382V440M1399.500 439V460M1415.500 376V386M1427.500 362V382M1431.500 383V391M1447.500 352V360M1451.500 359V370M1467.500 332V354M1471.500 332V354M1475.500 347V387M1483.500 347V363M1487.500 362V373M1491.500 371V436M1507.500 376V383M1515.500 336V342M1527.500 317V320M1535.500 301V309M1539.500 307V311M1551.500 304V313M1555.500 311V332M1559.500 330V337M1563.500 337V360M1567.500 358V374M1575.500 365V372M1583.500 370V375M1587.500 375V387M1591.500 386V391M1599.500 373V385M1607.500 354V355M1619.500 322V324M1643.500 290V300M1655.500 284V288"/></g>
<g fill="none" stroke="#3d7ab5"><path d="M931.500 240V270M935.500 230V263M939.500 230V250M943.500 229V253M951.500 228V257M955.500 223V243M959.500 210V228M963.500 190V215M967.500 169V191M971.500 172V187M983.500 159V193M999.500 210V252M1003.500 172V222M1015.500 206V328M1027.500 273V311M1031.500 218V283M1035.500 179V220M1043.500 177V195M1051.500 150V200M1059.500 145V180M1075.500 153V173M1087.500 168V207M1095.500 197V213M1103.500 257V285M1107.500 163V267M1111.500 143V204M1127.500 215V249M1139.500 212V232M1143.500 223V250M1151.500 238V264M1155.500 233V255M1159.500 180V233M1175.500 192V213M1191.500 256V299M1195.500 244V287M1203.500 256V298M1211.500 256V298M1219.500 247V268M1235.500 265V269M1251.500 330V376M1267.500 366V381M1271.500 357V381M1291.500 450V509M1295.500 440V469M1303.500 411V469M1307.500 401V458M1319.500 483V500M1323.500 477V511M1331.500 467V486M1335.500 463V490M1343.500 460V480M1359.500 494V516M1371.500 426V535M1379.500 363V457M1387.500 341V384M1403.500 424V467M1407.500 403V428M1411.500 368V414M1419.500 360V386M1423.500 357V386M1435.500 375V393M1439.500 363V380M1443.500 340V380M1455.500 348V373M1459.500 347V375M1463.500 320V362M1479.500 345V390M1495.500 386V446M1499.500 383V406M1503.500 373V390M1511.500 331V353M1519.500 330V345M1523.500 308V333M1531.500 300V320M1543.500 293V317M1547.500 293V312M1571.500 353V390M1579.500 348V378M1595.500 362V417M1603.500 338V402M1611.500 330V358M1615.500 322V338M1623.500 335V371M1627.500 322V346M1631.500 308V337M1635.500 297V322M1639.500 287V310M1647.500 288V302M1651.500 283V301"/>
<path stroke-width="3" d="M931.500 251V264M935.500 238V252M939.500 232V239M943.500 233V241M951.500 233V242M955.500 226V241M959.500 214V228M963.500 191V215M967.500 183V191M971.500 179V185M983.500 169V185M999.500 230V238M1003.500 178V222M1015.500 271V304M1027.500 281V307M1031.500 219V281M1035.500 185V219M1043.500 185V194M1051.500 150V199M1059.500 146V169M1075.500 163V165M1087.500 174V202M1095.500 203V209M1103.500 265V271M1107.500 204V266M1111.500 172V203M1127.500 217V239M1139.500 215V228M1143.500 225V243M1151.500 239V248M1155.500 233V240M1159.500 185V233M1175.500 200V209M1191.500 257V269M1195.500 256V258M1203.500 265V273M1211.500 258V288M1219.500 261V263M1235.500 267V269M1251.500 339V346M1267.500 370V372M1271.500 364V374M1291.500 450V488M1295.500 447V450M1303.500 444V459M1307.500 406V445M1319.500 489V499M1323.500 482V490M1331.500 473V486M1335.500 468V490M1343.500 463V470M1359.500 500V512M1371.500 426V535M1379.500 371V438M1387.500 346V380M1403.500 424V461M1407.500 407V425M1411.500 376V408M1419.500 378V386M1423.500 363V379M1435.500 380V391M1439.500 368V380M1443.500 352V370M1455.500 356V370M1459.500 356V364M1463.500 331V358M1479.500 347V387M1495.500 391V436M1499.500 388V392M1503.500 375V389M1511.500 336V343M1519.500 330V342M1523.500 313V331M1531.500 302V317M1543.500 302V311M1547.500 293V302M1571.500 363V375M1579.500 370V372M1595.500 373V388M1603.500 354V377M1611.500 335V355M1615.500 323V336M1623.500 346V371M1627.500 328V346M1631.500 310V330M1635.500 300V308M1639.500 290V308M1647.500 290V300M1651.500 285V292"/></g>
<path d="M1231.500 263V270M1230 266.500h3" stroke="#00e800" fill="none"/>
<rect x="926" y="288" width="918" height="2" fill="#f01414"/><rect x="926" y="290" width="918" height="1" fill="#8a8a8a"/>
<rect x="926" y="461" width="918" height="1.500" fill="#e00"/>
<!-- markers -->
<g class="c" stroke="#eee" stroke-width="1.200"><g fill="#000"><circle cx="1159.500" cy="184" r="4.300"/><circle cx="1159.500" cy="214.500" r="4.300"/><circle cx="1147.500" cy="218" r="4.300"/><circle cx="1227.500" cy="257" r="4.300"/><circle cx="1247.500" cy="312" r="4.300"/><circle cx="1315.500" cy="432" r="4.300"/><circle cx="1315.500" cy="436" r="4.300"/><circle cx="1315.500" cy="442" r="4.300"/><circle cx="1371.500" cy="513" r="4.300"/><circle cx="1371.500" cy="520" r="4.300"/><circle cx="1563.500" cy="398" r="4.300"/><circle cx="1603.500" cy="381" r="4.300"/><circle cx="1551.500" cy="300" r="4.300"/><circle cx="1627.500" cy="314" r="4.300"/></g>
<g stroke="none" fill="#ff4a00"><circle cx="1147.500" cy="218" r="3"/><circle cx="1227.500" cy="257" r="3"/><circle cx="1247.500" cy="312" r="3"/><circle cx="1315.500" cy="432" r="3"/><circle cx="1315.500" cy="442" r="3"/><circle cx="1371.500" cy="513" r="3"/><circle cx="1563.500" cy="398" r="3"/><circle cx="1551.500" cy="300" r="3"/></g>
<g stroke="none" fill="#2ecc2e"><circle cx="1159.500" cy="184" r="3"/><circle cx="1159.500" cy="214.500" r="3"/><circle cx="1371.500" cy="520" r="3"/><circle cx="1603.500" cy="381" r="3"/><circle cx="1627.500" cy="314" r="3"/></g>
<circle cx="1515" cy="360" r="19" fill="#ff4a00" stroke="#e8e8e8" stroke-width="1.500"/></g>
<text class="t" x="933" y="262">#4785246 sl</text><text class="t" x="933" y="274">#4785246 sell 4.78</text><text class="t" x="933" y="330">#4785246 tp</text>
<text class="t" x="942" y="120">GBPUSDx,H1</text><path d="M929 115h8l-4 4z" fill="#fff"/>
<path d="M1655 108h9l-4.500 5z" fill="#778899"/>
<text class="t" x="1757" y="121" textLength="69" lengthAdjust="spacingAndGlyphs">TradePanel MT4</text>
<g class="c" fill="none" stroke="#fff"><circle cx="1834" cy="118" r="5"/><path d="M1831 120q3 3 6 0"/></g><path d="M1832 116h1M1835 116h1" stroke="#fff"/>
<!-- right axis -->
<path d="M1844 134.500h3M1844 168.500h3M1844 202.500h3M1844 235.500h3M1844 270.500h3M1844 303.500h3M1844 337.500h3M1844 371.500h3M1844 405.500h3M1844 439.500h3M1844 473.500h3M1844 506.500h3M1844 540.500h3" stroke="#fff"/>
<g class="t"><text x="1851" y="138">1.27850</text><text x="1851" y="172">1.27700</text><text x="1851" y="206">1.27550</text><text x="1851" y="239">1.27405</text><text x="1851" y="274">1.27255</text><text x="1851" y="307">1.27105</text><text x="1851" y="341">1.26955</text><text x="1851" y="375">1.26805</text><text x="1851" y="409">1.26660</text><text x="1851" y="443">1.26510</text><text x="1851" y="477">1.26360</text><text x="1851" y="510">1.26210</text><text x="1851" y="544">1.26065</text><text x="1851" y="577">1.25920</text></g>
<rect x="1846" y="282" width="41" height="10" fill="#f00"/><rect x="1846" y="293" width="41" height="2" fill="#fff"/><text class="t" x="1851" y="291" style="fill:#300">1.27174</text>
<rect x="1846" y="455" width="41" height="10" fill="#f00"/><text class="t" x="1851" y="464" style="fill:#300">1.26405</text>
<text class="t" x="1848" y="588">25922</text><text class="t" x="1848" y="664">0</text><text class="t" x="1848" y="680">2220</text><text class="t" x="1848" y="721">0.00</text><text class="t" x="1848" y="754">-1860</text>
<path d="M926.500 757V762M990.500 757V762M1055.500 757V762M1119.500 757V762M1182.500 757V762M1246.500 757V762M1310.500 757V762M1374.500 757V762M1438.500 757V762M1502.500 757V762M1567.500 757V762M1631.500 757V762" stroke="#fff"/>
<g class="t"><text x="926" y="771">10 Jan 2024</text><text x="990" y="771">11 Jan 10:00</text><text x="1055" y="771">12 Jan 02:00</text><text x="1119" y="771">12 Jan 18:00</text><text x="1182" y="771">15 Jan 10:00</text><text x="1246" y="771">16 Jan 02:00</text><text x="1310" y="771">16 Jan 18:00</text><text x="1374" y="771">17 Jan 10:00</text><text x="1438" y="771">18 Jan 02:00</text><text x="1502" y="771">18 Jan 18:00</text><text x="1567" y="771">19 Jan 10:00</text><text x="1631" y="771">22 Jan 02:00</text></g>
<!-- right sub1 -->
<path fill="none" stroke="#1e90ff" stroke-width="3" d="M927.500 666v-17M931.500 666v-13M935.500 666v-5M939.500 666v-11M943.500 666v-17M947.500 666v-2M955.500 666v-2M959.500 666v-3M963.500 666v-3M967.500 666v-2M971.500 666v-3M975.500 666v-2M979.500 666v-3M983.500 666v-4M987.500 666v-9M991.500 666v-11M995.500 666v-12M999.500 666v-11M1003.500 666v-9M1007.500 666v-11M1011.500 666v-79M1015.500 666v-53M1019.500 666v-12M1023.500 666v-4M1027.500 666v-8M1031.500 666v-17M1035.500 666v-27M1039.500 666v-12M1043.500 666v-4M1051.500 666v-2M1055.500 666v-7M1059.500 666v-4M1063.500 666v-2M1067.500 666v-1M1071.500 666v-1M1075.500 666v-5M1079.500 666v-3M1083.500 666v-15M1087.500 666v-20M1091.500 666v-9M1095.500 666v-11M1099.500 666v-13M1103.500 666v-14M1107.500 666v-43M1111.500 666v-38M1115.500 666v-28M1119.500 666v-16M1123.500 666v-14M1127.500 666v-9M1131.500 666v-6M1135.500 666v-9M1139.500 666v-2M1143.500 666v-1M1147.500 666v-5M1151.500 666v-6M1155.500 666v-7M1159.500 666v-6M1163.500 666v-2M1167.500 666v-1M1175.500 666v-1M1179.500 666v-7M1183.500 666v-19M1187.500 666v-10M1191.500 666v-11M1195.500 666v-7M1199.500 666v-10M1203.500 666v-11M1207.500 666v-7M1211.500 666v-12M1215.500 666v-9M1219.500 666v-3M1223.500 666v-1M1227.500 666v-2M1231.500 666v-1M1243.500 666v-5M1247.500 666v-8M1251.500 666v-14M1255.500 666v-2M1259.500 666v-6M1263.500 666v-5M1267.500 666v-3M1271.500 666v-10M1275.500 666v-30M1279.500 666v-30M1283.500 666v-26M1287.500 666v-26M1291.500 666v-23M1295.500 666v-24M1299.500 666v-37M1303.500 666v-31M1307.500 666v-24M1311.500 666v-55M1315.500 666v-24M1319.500 666v-19M1323.500 666v-16M1327.500 666v-7M1331.500 666v-3M1339.500 666v-3M1343.500 666v-3M1347.500 666v-3M1351.500 666v-3M1355.500 666v-4M1359.500 666v-4M1363.500 666v-10M1367.500 666v-15M1371.500 666v-40M1375.500 666v-45M1379.500 666v-24M1383.500 666v-20M1387.500 666v-14M1391.500 666v-12M1395.500 666v-34M1399.500 666v-27M1403.500 666v-24M1407.500 666v-22M1411.500 666v-14M1415.500 666v-9M1419.500 666v-9M1423.500 666v-8M1427.500 666v-7M1435.500 666v-3M1439.500 666v-4M1443.500 666v-4M1447.500 666v-3M1451.500 666v-1M1459.500 666v-3M1463.500 666v-4M1467.500 666v-11M1471.500 666v-14M1475.500 666v-20M1479.500 666v-24M1483.500 666v-8M1487.500 666v-13M1491.500 666v-45M1495.500 666v-25M1499.500 666v-22M1503.500 666v-14M1507.500 666v-9M1511.500 666v-8M1515.500 666v-17M1519.500 666v-9M1523.500 666v-4M1531.500 666v-3M1535.500 666v-3M1539.500 666v-3M1543.500 666v-3M1547.500 666v-2M1551.500 666v-2M1555.500 666v-3M1559.500 666v-6M1563.500 666v-34M1567.500 666v-22M1571.500 666v-17M1575.500 666v-11M1579.500 666v-9M1583.500 666v-15M1587.500 666v-17M1591.500 666v-22M1595.500 666v-39M1599.500 666v-18M1603.500 666v-9M1607.500 666v-8M1611.500 666v-12M1615.500 666v-6M1619.500 666v-5M1627.500 666v-5M1631.500 666v-2M1635.500 666v-3M1639.500 666v-3M1643.500 666v-2M1647.500 666v-2M1651.500 666v-2M1655.500 666v-3"/>
<!-- right sub2 -->
<path fill="none" stroke="#32cd32" stroke-width="3" d="M935.500 717v-8M947.500 717v-1M955.500 717v-1M959.500 717v-1M963.500 717v-4M967.500 717v-1M999.500 717v-6M1003.500 717v-3M1011.500 717v-11M1015.500 717v-11M1019.500 717v-11M1023.500 717v-2M1027.500 717v-1M1031.500 717v-1M1039.500 717v-1M1051.500 717v-5M1063.500 717v-1M1111.500 717v-1M1103.500 717v-6M1107.500 717v-5M1119.500 717v-1M1123.500 717v-5M1131.500 717v-10M1139.500 717v-3M1159.500 717v-16M1163.500 717v-8M1167.500 717v-1M1171.500 717v-1M1195.500 717v-3M1199.500 717v-5M1203.500 717v-3M1207.500 717v-8M1219.500 717v-1M1271.500 717v-10M1275.500 717v-10M1279.500 717v-20M1283.500 717v-13M1287.500 717v-14M1291.500 717v-10M1295.500 717v-42M1299.500 717v-13M1303.500 717v-24M1307.500 717v-9M1311.500 717v-8M1331.500 717v-1M1339.500 717v-1M1343.500 717v-8M1359.500 717v-1M1367.500 717v-6M1371.500 717v-9M1395.500 717v-10M1399.500 717v-9M1403.500 717v-4M1419.500 717v-10M1431.500 717v-1M1439.500 717v-2M1443.500 717v-1M1455.500 717v-1M1459.500 717v-2M1463.500 717v-2M1467.500 717v-1M1479.500 717v-3M1483.500 717v-3M1491.500 717v-20M1495.500 717v-13M1499.500 717v-3M1519.500 717v-5M1523.500 717v-7M1527.500 717v-1M1547.500 717v-4M1587.500 717v-3M1591.500 717v-2M1595.500 717v-13M1599.500 717v-34M1603.500 717v-5M1615.500 717v-1M1619.500 717v-1M1647.500 717v-4M1651.500 717v-1M1655.500 717v-1"/>
<path fill="none" stroke="#ff4500" stroke-width="3" d="M927.500 717v3M931.500 717v2M939.500 717v8M943.500 717v9M971.500 717v2M975.500 717v4M979.500 717v4M983.500 717v5M987.500 717v6M991.500 717v15M995.500 717v9M1007.500 717v6M1035.500 717v7M1043.500 717v3M1055.500 717v2M1059.500 717v1M1067.500 717v6M1071.500 717v3M1075.500 717v6M1079.500 717v12M1083.500 717v14M1087.500 717v24M1091.500 717v12M1095.500 717v1M1099.500 717v8M1111.500 717v7M1115.500 717v7M1127.500 717v2M1135.500 717v10M1143.500 717v1M1147.500 717v8M1151.500 717v17M1155.500 717v7M1175.500 717v5M1179.500 717v6M1183.500 717v6M1211.500 717v5M1215.500 717v2M1223.500 717v8M1227.500 717v2M1231.500 717v6M1235.500 717v1M1239.500 717v5M1247.500 717v7M1251.500 717v14M1255.500 717v10M1259.500 717v4M1263.500 717v9M1267.500 717v4M1315.500 717v37M1319.500 717v6M1323.500 717v1M1327.500 717v1M1335.500 717v4M1347.500 717v3M1351.500 717v7M1355.500 717v8M1363.500 717v10M1375.500 717v10M1379.500 717v2M1383.500 717v11M1387.500 717v8M1391.500 717v18M1407.500 717v4M1411.500 717v5M1415.500 717v1M1423.500 717v16M1435.500 717v4M1447.500 717v3M1451.500 717v2M1475.500 717v16M1487.500 717v10M1503.500 717v5M1507.500 717v5M1511.500 717v4M1515.500 717v10M1531.500 717v4M1535.500 717v4M1539.500 717v1M1551.500 717v1M1555.500 717v2M1559.500 717v3M1563.500 717v8M1567.500 717v9M1571.500 717v10M1575.500 717v11M1579.500 717v12M1583.500 717v6M1607.500 717v3M1611.500 717v9M1623.500 717v1M1631.500 717v5M1635.500 717v5M1639.500 717v4M1643.500 717v3"/>
<!-- right sub UI -->
<text class="t" x="931" y="590" textLength="215" lengthAdjust="spacingAndGlyphs">ClusterDelta Volume BOX 5.2 ?clusterdelta.com 994</text>
<text class="t" x="931" y="682" textLength="205" lengthAdjust="spacingAndGlyphs">ClusterDelta Volume BOX 5.2 ?clusterdelta.com 8</text>
<text class="t" x="1655" y="660" style="font-size:11px;fill:#e01010">994</text><text class="t" x="1655" y="714" style="font-size:11px;fill:#e01010">8</text>
<g fill="#000" stroke="#808080"><rect x="959.500" y="596.500" width="123" height="19"/><rect x="959.500" y="688.500" width="123" height="19"/><rect x="1088.500" y="596.500" width="20" height="19"/><rect x="1088.500" y="688.500" width="20" height="19"/></g>
<text x="1021" y="610" text-anchor="middle" style="font-size:10.500px" fill="#aaa">6B - GBP/USD</text><text x="1021" y="702" text-anchor="middle" style="font-size:10.500px" fill="#aaa">6B - GBP/USD</text>
<path d="M1091.500 613v-6M1094.500 613v-9M1097.500 613v-12M1100.500 613v-7M1103.500 613v-10M1106.500 613v-6" stroke="#1e90ff" stroke-width="2"/>
<path d="M1092 691v8M1097 690v8M1102 693v5" stroke="#32cd32" stroke-width="2"/><path d="M1094.500 698v6M1099.500 698v4M1104.500 698v7" stroke="#ff4500" stroke-width="2"/>
<g class="c">
<circle cx="941" cy="606" r="9.500" fill="#6aa82a" stroke="#aaa" stroke-width="2.500"/><path d="M937 606l3 4 5-8" fill="none" stroke="#e8f5d0" stroke-width="1.500"/>
<circle cx="941" cy="698" r="9.500" fill="#6aa82a" stroke="#aaa" stroke-width="2.500"/><path d="M937 698l3 4 5-8" fill="none" stroke="#e8f5d0" stroke-width="1.500"/>
<g fill="#c4c4c4"><circle cx="1125" cy="606" r="10"/><circle cx="1149" cy="606" r="10"/><circle cx="1125" cy="698" r="10"/><circle cx="1149" cy="698" r="10"/></g>
<path d="M1120 603h3l4-4v14l-4-4h-3zM1120 695h3l4-4v14l-4-4h-3z" fill="#444"/><path d="M1129 602l3 8M1129 694l3 8" stroke="#eee" stroke-width="1.300"/>
<rect x="1144" y="598" width="10" height="16" rx="2" fill="none" stroke="#333" stroke-width="2"/><rect x="1144" y="690" width="10" height="16" rx="2" fill="none" stroke="#333" stroke-width="2"/>
<path d="M1147 602h2v8M1147 694h2v8" stroke="#333" fill="none"/>
<!-- watermark -->
<path d="M1595 725h11a8 8 0 0 1 8 8v11a8 8 0 0 1-7 8l-6 3-1-3h-5a8 8 0 0 1-8-8v-11a8 8 0 0 1 8-8z" fill="#f4f4f4"/>
<path d="M1602 752v-11h-3v-4.500h3v-3c0-3 2-4.500 4.500-4.500h3v4h-2c-1.500 0-2 .7-2 2v1.500h4l-.7 4.500h-3.300v11z" fill="#000"/>
</g>
<text x="1626" y="748" textLength="257" lengthAdjust="spacingAndGlyphs" style="font-size:29px" fill="#f0f0f0">@Hong peng Wang</text>
</svg>
</body></html>
